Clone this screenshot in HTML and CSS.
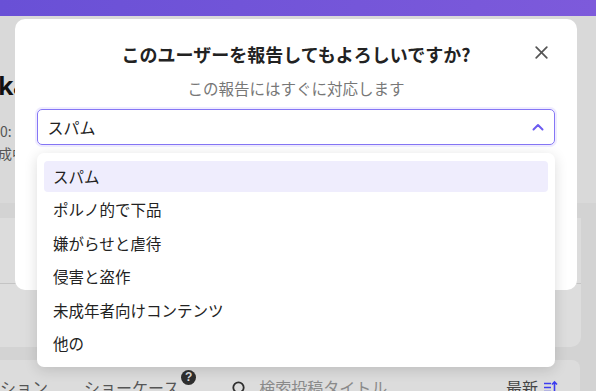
FILE: index.html
```html
<!DOCTYPE html>
<html lang="ja">
<head>
<meta charset="utf-8">
<link rel="stylesheet" href="styles.css">
</head>
<body>
<div class="page">
  <header class="topbar"></header>
  <section class="profile">
    <h1 class="name">ka</h1>
    <p class="meta">0: <span class="meta-id">e</span></p>
    <p class="meta meta-cut">成中</p>
  </section>
  <div class="content">
    <div class="card">
      <div class="card-top"></div>
      <div class="card-bottom"></div>
    </div>
    <nav class="bottom-bar">
      <span class="tab">ション</span>
      <span class="tab tab-help">ショーケース<span class="help">?</span></span>
      <span class="search">
        <svg class="search-icon" width="14" height="15" viewBox="0 0 14 15"><circle cx="6.5" cy="6.5" r="5.2" fill="none" stroke="#2e2e2e" stroke-width="1.8"/><path d="M10 10.5L12.5 13.5" stroke="#2e2e2e" stroke-width="1.8" stroke-linecap="round"/></svg>
        <span class="search-text">検索投稿タイトル</span>
      </span>
      <span class="sort">最新
        <svg width="15" height="15" viewBox="0 0 15 15"><path d="M1 3.5H8M1 7.5H8M1 11.5H8" stroke="#3d3df0" stroke-width="1.6"/><path d="M11.5 14V2M9 4.5L11.5 2L14 4.5" stroke="#3d3df0" stroke-width="1.6" fill="none"/></svg>
      </span>
    </nav>
  </div>
</div>

<div class="modal">
  <button class="close" aria-label="閉じる">
    <svg width="13" height="13" viewBox="0 0 13 13"><path d="M1.2 1.2L11.8 11.8M11.8 1.2L1.2 11.8" stroke="#555" stroke-width="1.7" stroke-linecap="round"/></svg>
  </button>
  <h2 class="title">このユーザーを報告してもよろしいですか?</h2>
  <p class="subtitle">この報告にはすぐに対応します</p>
  <div class="select-wrap">
    <div class="select">
      <span class="select-value">スパム</span>
      <svg class="chevron" width="12" height="8" viewBox="0 0 12 8"><path d="M1.5 6.5L6 2L10.5 6.5" stroke="#6c5cf0" stroke-width="2" fill="none" stroke-linecap="round" stroke-linejoin="round"/></svg>
    </div>
    <ul class="dropdown">
      <li class="option active">スパム</li>
      <li class="option">ポルノ的で下品</li>
      <li class="option">嫌がらせと虐待</li>
      <li class="option">侵害と盗作</li>
      <li class="option">未成年者向けコンテンツ</li>
      <li class="option">他の</li>
    </ul>
  </div>
</div>
</body>
</html>
```

FILE: styles.css
```css
html, body {
  margin: 0;
  padding: 0;
}
body {
  width: 596px;
  height: 391px;
  overflow: hidden;
  position: relative;
  background: #d9d9d9;
  font-family: "Noto Sans CJK JP", "Noto Sans", sans-serif;
  color: #222;
}
.page {
  display: flex;
  flex-direction: column;
  height: 391px;
}
.topbar {
  height: 16px;
  background: linear-gradient(90deg, #6950d6, #7d5adb);
  flex: none;
}
.profile {
  height: 187px;
  flex: none;
  padding-top: 54px;
  box-sizing: border-box;
}
.name {
  margin: 0 0 0 -2px;
  font-size: 25px;
  line-height: 30px;
  font-weight: 700;
  color: #111;
  font-family: "Noto Sans", sans-serif;
  letter-spacing: -0.5px;
}
.meta {
  margin: 0;
  font-size: 14px;
  line-height: 22px;
  color: #555;
  white-space: nowrap;
}
.meta:first-of-type {
  margin-top: 20px;
}
.meta-id {
  color: #7a6a5a;
}
.meta-cut {
  margin-left: -2px;
}
.content {
  flex: 1;
  background: #d3d3d3;
  padding-top: 15px;
  display: flex;
  flex-direction: column;
  gap: 13px;
}
.card {
  width: 581px;
  height: 129px;
  background: #dddddd;
  border-radius: 0 0 10px 0;
  display: flex;
  flex-direction: column;
}
.card-top {
  height: 65px;
  border-bottom: 1px solid #c4c4c4;
  background: #dcdcdc;
}
.bottom-bar {
  width: 580px;
  flex: 1;
  background: #dcdcdc;
  border-radius: 0 8px 0 0;
  display: flex;
  align-items: flex-start;
  padding-top: 17px;
  box-sizing: border-box;
  font-size: 16px;
  line-height: 20px;
  color: #555;
}
.tab {
  margin-left: 0;
}
.tab-help {
  margin-left: 36px;
  position: relative;
}
.help {
  position: absolute;
  right: -17px;
  top: -7px;
  width: 15px;
  height: 15px;
  border-radius: 50%;
  background: #2e2e2e;
  color: #dcdcdc;
  font-family: "Liberation Sans", sans-serif;
  font-weight: 700;
  font-size: 12px;
  line-height: 15px;
  text-align: center;
}
.search {
  margin-left: 53px;
  display: flex;
  align-items: center;
  gap: 13px;
}
.search-icon {
  margin-top: 2px;
}
.search-text {
  color: #8a8a8a;
}
.sort {
  margin-left: auto;
  margin-right: 22px;
  display: flex;
  align-items: center;
  gap: 5px;
  color: #444;
}

/* modal */
.modal {
  position: absolute;
  left: 15px;
  top: 19px;
  width: 562px;
  height: 271px;
  box-sizing: border-box;
  background: #fff;
  border-radius: 10px;
  padding: 22px 22px 0;
}
.close {
  position: absolute;
  right: 29px;
  top: 27px;
  border: 0;
  background: none;
  padding: 0;
  width: 13px;
  height: 13px;
  display: flex;
}
.title {
  margin: 0;
  text-align: center;
  font-size: 18px;
  line-height: 26px;
  font-weight: 700;
  color: #222;
}
.subtitle {
  margin: 10px 0 0;
  text-align: center;
  font-size: 15.5px;
  line-height: 22px;
  color: #777;
}
.select-wrap {
  position: relative;
  margin-top: 10px;
}
.select {
  height: 36px;
  box-sizing: border-box;
  border: 1.5px solid #8576f5;
  border-radius: 5px;
  box-shadow: 0 0 0 2px #efecff;
  display: flex;
  align-items: center;
  padding: 0 10px 0 9.5px;
}
.select-value {
  font-size: 16px;
  line-height: 22px;
  color: #222;
}
.chevron {
  margin-left: auto;
  margin-right: 0;
}
.dropdown {
  position: absolute;
  left: 0;
  right: 0;
  top: 44px;
  margin: 0;
  padding: 8px 7px 7px;
  list-style: none;
  background: #fff;
  border-radius: 7px;
  box-shadow: 0 3px 14px rgba(0, 0, 0, 0.14);
  display: flex;
  flex-direction: column;
  gap: 2.6px;
}
.option {
  height: 31px;
  box-sizing: border-box;
  display: flex;
  align-items: center;
  padding: 0 0 2px 9px;
  border-radius: 4px;
  font-size: 15.5px;
  color: #222;
}
.option.active {
  background: #efedfd;
}
```
